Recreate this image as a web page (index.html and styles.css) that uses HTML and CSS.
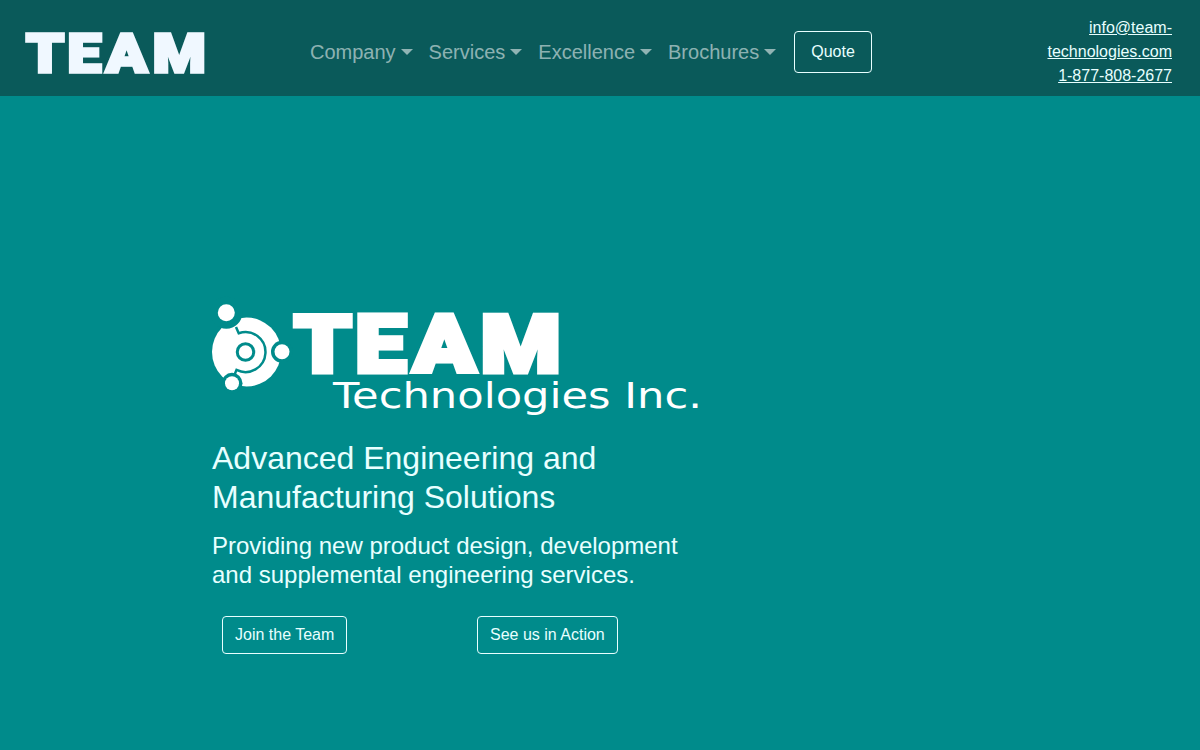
FILE: index.html
```html
<!DOCTYPE html>
<html lang="en">

<head>
    <title>TEAM Technologies Inc.</title>
    <link rel="stylesheet" href="styles.css">
</head>

<body>
    <nav class="navbar">
        <a class="brand" href="#">
            <svg class="brand-logo" width="185" height="46" viewBox="0 0 185 46">
                <g transform="scale(1.14 1)">
                    <text class="logo-word brand-word" x="0.9 37.2 71 112" y="42.8" font-size="53">TEAM</text>
                </g>
            </svg>
        </a>

        <ul class="nav-links">
            <li><a href="#" class="nav-link">Company</a></li>
            <li><a href="#" class="nav-link">Services</a></li>
            <li><a href="#" class="nav-link">Excellence</a></li>
            <li><a href="#" class="nav-link">Brochures</a></li>
            <li><a href="#" class="btn btn-quote">Quote</a></li>
        </ul>

        <div class="contact">
            <a href="#">info@team-technologies.com</a><br>
            <a href="#">1-877-808-2677</a>
        </div>
    </nav>

    <main class="hero">
        <div class="hero-content">
            <svg class="hero-logo" width="492" height="118" viewBox="0 0 492 118">
                <!-- mark: disc with three satellites -->
                <circle class="mark" cx="34.5" cy="52" r="34.5" />
                <circle class="mark-gap" cx="14.3" cy="12.7" r="16" />
                <circle class="mark-gap" cx="70" cy="51.7" r="11" />
                <circle class="mark-gap" cx="20" cy="83.3" r="10.5" />
                <path class="mark-arc" d="M24 27 L26.7 33.2 A20 20 0 1 1 24.5 69.9 L22 76" />
                <circle class="mark-ring" cx="33.5" cy="52" r="8.25" />
                <circle class="mark" cx="14.3" cy="12.7" r="8.5" />
                <circle class="mark" cx="70" cy="51.7" r="7.5" />
                <circle class="mark" cx="20" cy="83.3" r="7" />
                <g transform="scale(1.14 1)">
                    <text class="logo-word hero-word" x="72 125.6 176.6 235.8" y="71.5" font-size="80">TEAM</text>
                </g>
                <text class="logo-sub" x="121" y="108" textLength="369" lengthAdjust="spacingAndGlyphs" font-size="36">Technologies Inc.</text>
            </svg>

            <h1 class="hero-title">Advanced Engineering and Manufacturing Solutions</h1>
            <p class="hero-text">Providing new product design, development and supplemental engineering services.</p>

            <div class="hero-actions">
                <div class="action-col"><a href="#" class="btn">Join the Team</a></div>
                <div class="action-col"><a href="#" class="btn">See us in Action</a></div>
            </div>
        </div>
    </main>
</body>

</html>
```

FILE: styles.css
```css
* {
    box-sizing: border-box;
}

body {
    margin: 0;
    min-height: 750px;
    overflow: hidden;
    background-color: #008b8b;
    color: #e8ffff;
    font-family: "Liberation Sans", Arial, sans-serif;
    font-size: 16px;
    line-height: 24px;
}

a {
    color: inherit;
}

.navbar {
    display: flex;
    align-items: center;
    height: 96px;
    padding: 8px 28px 0 25px;
    background-color: #0a5a5a;
}

.brand {
    display: block;
    width: 277px;
    flex: none;
}

.brand-logo {
    display: block;
    overflow: visible;
}

.logo-word {
    font-family: "Roboto", "Liberation Sans", sans-serif;
    font-weight: 900;
}

.brand-word {
    fill: #f0f8ff;
    stroke: #f0f8ff;
    stroke-width: 3.3;
}

.hero-word {
    fill: #ffffff;
    stroke: #ffffff;
    stroke-width: 5;
}

.nav-links {
    display: flex;
    align-items: center;
    flex: 1;
    list-style: none;
    margin: 0;
    padding: 0;
}

.nav-link {
    display: flex;
    align-items: center;
    padding: 8px;
    font-size: 20px;
    line-height: 30px;
    text-decoration: none;
    color: rgba(255, 255, 255, 0.55);
}

.nav-link::after {
    content: "";
    margin-left: 5px;
    border-top: 6px solid;
    border-left: 6px solid transparent;
    border-right: 6px solid transparent;
}

.btn {
    display: inline-block;
    padding: 6px 12px;
    border: 1px solid #e8ffff;
    border-radius: 4px;
    text-decoration: none;
    color: #e8ffff;
}

.btn-quote {
    margin-left: 10px;
    padding: 8px 16px;
}

.contact {
    width: 150px;
    flex: none;
    text-align: right;
}

.hero {
    padding: 204px 0 0 212px;
}

.hero-content {
    width: 510px;
}

.hero-logo {
    display: block;
    margin-bottom: 21px;
    overflow: visible;
}

.mark {
    fill: #ffffff;
}

.mark-gap {
    fill: #008b8b;
}

.mark-arc {
    fill: none;
    stroke: #008b8b;
    stroke-width: 2.5;
}

.mark-ring {
    fill: none;
    stroke: #008b8b;
    stroke-width: 3;
}

.logo-sub {
    fill: #ffffff;
    font-family: "DejaVu Sans", sans-serif;
}

.hero-title {
    margin: 0 0 14px;
    max-width: 460px;
    font-size: 32px;
    font-weight: 400;
    line-height: 39px;
}

.hero-text {
    margin: 0 0 27px;
    max-width: 480px;
    font-size: 24px;
    line-height: 29px;
}

.hero-actions {
    display: grid;
    grid-template-columns: 255px 255px;
}

.action-col {
    padding-left: 10px;
}
```
